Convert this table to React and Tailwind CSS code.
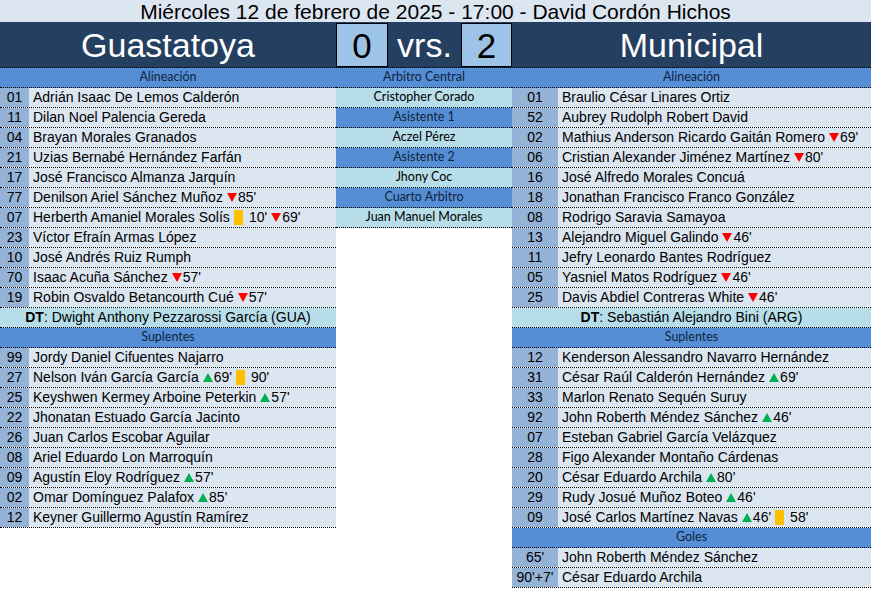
import React from 'react';

const leftStarters = [
  ['01', 'Adrián Isaac De Lemos Calderón'],
  ['11', 'Dilan Noel Palencia Gereda'],
  ['04', 'Brayan Morales Granados'],
  ['21', 'Uzias Bernabé Hernández Farfán'],
  ['17', 'José Francisco Almanza Jarquín'],
  ['77', 'Denilson Ariel Sánchez Muñoz', [['out', "85'"]]],
  ['07', 'Herberth Amaniel Morales Solís', [['y', "10'"], ['out', "69'"]]],
  ['23', 'Víctor Efraín Armas López'],
  ['10', 'José Andrés Ruiz Rumph'],
  ['70', 'Isaac Acuña Sánchez', [['out', "57'"]]],
  ['19', 'Robin Osvaldo Betancourth Cué', [['out', "57'"]]],
];

const leftSubs = [
  ['99', 'Jordy Daniel Cifuentes Najarro'],
  ['27', 'Nelson Iván García García', [['in', "69'"], ['y', "90'"]]],
  ['25', 'Keyshwen Kermey Arboine Peterkin', [['in', "57'"]]],
  ['22', 'Jhonatan Estuado García Jacinto'],
  ['26', 'Juan Carlos Escobar Aguilar'],
  ['08', 'Ariel Eduardo Lon Marroquín'],
  ['09', 'Agustín Eloy Rodríguez', [['in', "57'"]]],
  ['02', 'Omar Domínguez Palafox', [['in', "85'"]]],
  ['12', 'Keyner Guillermo Agustín Ramírez'],
];

const rightStarters = [
  ['01', 'Braulio César Linares Ortiz'],
  ['52', 'Aubrey Rudolph Robert David'],
  ['02', 'Mathius Anderson Ricardo Gaitán Romero', [['out', "69'"]]],
  ['06', 'Cristian Alexander Jiménez Martínez', [['out', "80'"]]],
  ['16', 'José Alfredo Morales Concuá'],
  ['18', 'Jonathan Francisco Franco González'],
  ['08', 'Rodrigo Saravia Samayoa'],
  ['13', 'Alejandro Miguel Galindo', [['out', "46'"]]],
  ['11', 'Jefry Leonardo Bantes Rodríguez'],
  ['05', 'Yasniel Matos Rodríguez', [['out', "46'"]]],
  ['25', 'Davis Abdiel Contreras White', [['out', "46'"]]],
];

const rightSubs = [
  ['12', 'Kenderson Alessandro Navarro Hernández'],
  ['31', 'César Raúl Calderón Hernández', [['in', "69'"]]],
  ['33', 'Marlon Renato Sequén Suruy'],
  ['92', 'John Roberth Méndez Sánchez', [['in', "46'"]]],
  ['07', 'Esteban Gabriel García Velázquez'],
  ['28', 'Figo Alexander Montaño Cárdenas'],
  ['20', 'César Eduardo Archila', [['in', "80'"]]],
  ['29', 'Rudy Josué Muñoz Boteo', [['in', "46'"]]],
  ['09', 'José Carlos Martínez Navas', [['in', "46'"], ['y', "58'"]]],
];

const goals = [
  ["65'", 'John Roberth Méndez Sánchez'],
  ["90'+7'", 'César Eduardo Archila'],
];

const referees = [
  ['Arbitro Central', true],
  ['Cristopher Corado', false],
  ['Asistente 1', true],
  ['Aczel Pérez', false],
  ['Asistente 2', true],
  ['Jhony Coc', false],
  ['Cuarto Arbitro', true],
  ['Juan Manuel Morales', false],
];

function Tri({ up }) {
  return (
    <svg width="10" height="9" viewBox="0 0 10 9" className="inline-block mr-px">
      <polygon points={up ? '5,0 10,9 0,9' : '0,0 10,0 5,9'} fill={up ? '#00b050' : '#ff0000'} />
    </svg>
  );
}

function Events({ ev }) {
  if (!ev) return null;
  return ev.map(([type, minute], i) => (
    <span key={i} className="inline-flex items-center ml-[4px]">
      {type === 'y' ? (
        <span className="inline-block w-[9px] h-[15px] bg-[#ffc000] mr-[6px]" />
      ) : (
        <Tri up={type === 'in'} />
      )}
      {minute}
    </span>
  ));
}

function SectionHeader({ label }) {
  return (
    <div className="h-[20px] flex items-center justify-center bg-[#558ed5] border-b border-dotted border-black font-['Lato',sans-serif] text-[12.5px] text-[#0f243e]">
      {label}
    </div>
  );
}

function PlayerRow({ num, name, ev, numW }) {
  return (
    <div className="h-[20px] flex border-b border-dotted border-black text-[14px] text-black">
      <div className={`${numW} bg-[#95b3d7] flex items-center justify-center shrink-0`}>{num}</div>
      <div className="flex-1 bg-[#dce6f1] flex items-center pl-[4px] whitespace-nowrap">
        {name}
        <Events ev={ev} />
      </div>
    </div>
  );
}

function CoachRow({ name }) {
  return (
    <div className="h-[20px] flex items-center justify-center bg-[#b7dee8] border-b border-dotted border-black text-[14px] text-black whitespace-nowrap">
      <span className="font-bold">DT</span>: {name}
    </div>
  );
}

function ScoreBox({ value, w }) {
  return (
    <div className={`${w} mt-px bg-[#9dc3e6] border border-black flex items-center justify-center text-black text-[35px]`}>
      {value}
    </div>
  );
}

export default function App() {
  return (
    <div className="w-[871px] h-[589px] bg-white font-['Liberation_Sans',Arial,sans-serif] overflow-hidden">
      {/* Title */}
      <div className="h-[22px] bg-[#dce6f1] flex items-center justify-center text-[21px] text-black leading-none">
        Miércoles 12 de febrero de 2025 - 17:00 - David Cordón Hichos
      </div>

      {/* Teams and score */}
      <div className="h-[46px] flex bg-[#243f60] border-b border-dotted border-black text-white leading-none">
        <div className="w-[336px] flex items-center justify-center text-[34px]">Guastatoya</div>
        <ScoreBox value="0" w="w-[52px]" />
        <div className="w-[73px] flex items-center justify-center text-[34px]">vrs.</div>
        <ScoreBox value="2" w="w-[51px]" />
        <div className="flex-1 flex items-center justify-center text-[34px]">Municipal</div>
      </div>

      <div className="grid grid-cols-[336px_176px_359px] items-start">
        {/* Guastatoya */}
        <div className="flex flex-col">
          <SectionHeader label="Alineación" />
          {leftStarters.map(([n, name, ev]) => (
            <PlayerRow key={n + name} num={n} name={name} ev={ev} numW="w-[29px]" />
          ))}
          <CoachRow name="Dwight Anthony Pezzarossi García (GUA)" />
          <SectionHeader label="Suplentes" />
          {leftSubs.map(([n, name, ev]) => (
            <PlayerRow key={n + name} num={n} name={name} ev={ev} numW="w-[29px]" />
          ))}
        </div>

        {/* Referees */}
        <div className="flex flex-col">
          {referees.map(([label, role]) =>
            role ? (
              <SectionHeader key={label} label={label} />
            ) : (
              <div
                key={label}
                className="h-[20px] flex items-center justify-center bg-[#b7dee8] border-b border-dotted border-black font-['Lato',sans-serif] text-[12.5px] text-black"
              >
                {label}
              </div>
            )
          )}
        </div>

        {/* Municipal */}
        <div className="flex flex-col">
          <SectionHeader label="Alineación" />
          {rightStarters.map(([n, name, ev]) => (
            <PlayerRow key={n + name} num={n} name={name} ev={ev} numW="w-[46px]" />
          ))}
          <CoachRow name="Sebastián Alejandro Bini (ARG)" />
          <SectionHeader label="Suplentes" />
          {rightSubs.map(([n, name, ev]) => (
            <PlayerRow key={n + name} num={n} name={name} ev={ev} numW="w-[46px]" />
          ))}
          <SectionHeader label="Goles" />
          {goals.map(([m, name]) => (
            <PlayerRow key={m} num={m} name={name} numW="w-[46px]" />
          ))}
        </div>
      </div>
    </div>
  );
}
